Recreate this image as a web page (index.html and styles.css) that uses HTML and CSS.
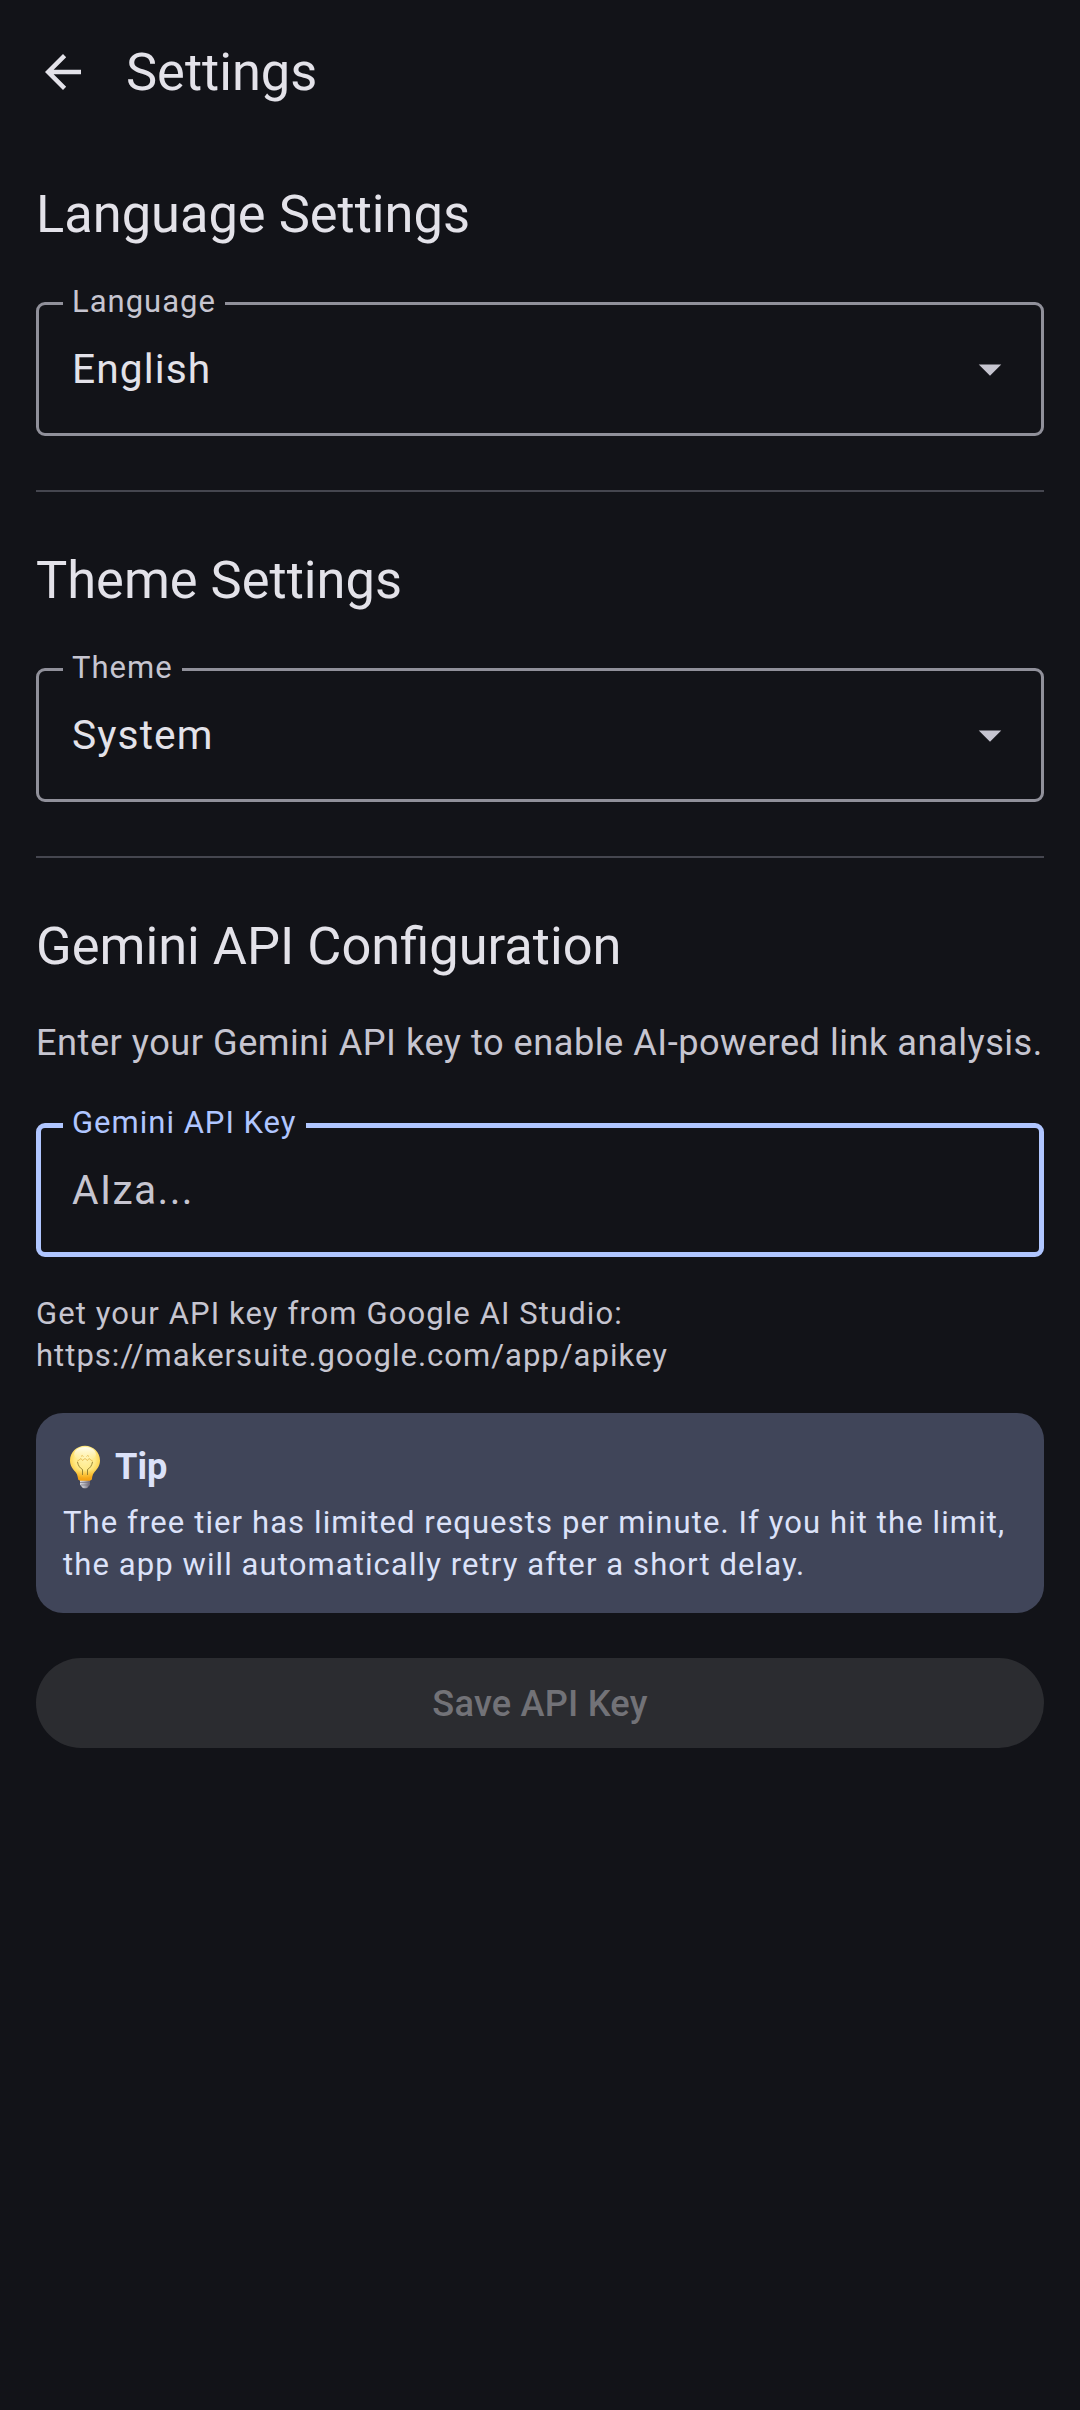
FILE: index.html
```html
<!DOCTYPE html>
<html lang="en">
<head>
<meta charset="utf-8">
<title>Settings</title>
<link rel="stylesheet" href="styles.css">
</head>
<body>
<header class="top-bar">
  <svg class="back-icon" viewBox="0 0 24 24" aria-label="Back"><path fill="currentColor" d="M20 11H7.83l5.59-5.59L12 4l-8 8 8 8 1.41-1.41L7.83 13H20z"/></svg>
  <h1 class="headline">Settings</h1>
</header>
<main class="content">
  <section class="section">
    <h2 class="headline">Language Settings</h2>
    <div class="field">
      <span class="field-label">Language</span>
      <span class="field-value">English</span>
      <svg class="caret" viewBox="0 0 24 24"><path fill="currentColor" d="M7 10l5 5 5-5z"/></svg>
    </div>
  </section>
  <hr class="divider">
  <section class="section">
    <h2 class="headline">Theme Settings</h2>
    <div class="field">
      <span class="field-label">Theme</span>
      <span class="field-value">System</span>
      <svg class="caret" viewBox="0 0 24 24"><path fill="currentColor" d="M7 10l5 5 5-5z"/></svg>
    </div>
  </section>
  <hr class="divider">
  <section class="section">
    <h2 class="headline">Gemini API Configuration</h2>
    <p class="description">Enter your Gemini API key to enable AI-powered link analysis.</p>
    <div class="field field-focused">
      <span class="field-label">Gemini API Key</span>
      <span class="field-value placeholder">AIza...</span>
    </div>
    <p class="small hint">Get your API key from Google AI Studio:<br><span class="url">https://makersuite.google.com/app/apikey</span></p>
    <aside class="tip">
      <h3 class="tip-title">
        <svg class="bulb" viewBox="0 0 32 44">
          <defs>
            <radialGradient id="glass" cx="50%" cy="36%" r="62%">
              <stop offset="0" stop-color="#fff3b0"/>
              <stop offset=".55" stop-color="#ffea86"/>
              <stop offset=".85" stop-color="#fdd04a"/>
              <stop offset="1" stop-color="#f0a41c"/>
            </radialGradient>
            <linearGradient id="shine" x1="0" y1="0" x2="0" y2="1">
              <stop offset="0" stop-color="#fffef2"/>
              <stop offset="1" stop-color="#fff6c4" stop-opacity="0"/>
            </linearGradient>
            <linearGradient id="neck" x1="0" y1="0" x2="0" y2="1">
              <stop offset="0" stop-color="#f9b21d" stop-opacity="0"/>
              <stop offset="1" stop-color="#f6a313"/>
            </linearGradient>
            <linearGradient id="base" x1="0" y1="0" x2="1" y2="0">
              <stop offset="0" stop-color="#d9d9df"/>
              <stop offset=".4" stop-color="#b9b9c1"/>
              <stop offset="1" stop-color="#686070"/>
            </linearGradient>
          </defs>
          <path fill="url(#base)" d="M11 34h10v5.5l-2.500 3.200q-2.500 1.300-5 0L11 39.500z"/>
          <path stroke="#77727f" stroke-width=".7" d="M11 37.500h10M11.500 40h9"/>
          <path fill="url(#glass)" d="M16 .8C7.700.8 1 7.300 1 15.500c0 5 2.600 8.300 5.300 11.300C8.400 29.200 8.800 31 9 33.500q.2 1.700 2 2h10q1.800-.3 2-2c.2-2.500.6-4.300 2.700-6.700 2.700-3 5.300-6.300 5.300-11.300C31 7.300 24.300.8 16 .8z"/>
          <path fill="url(#neck)" d="M4.500 24.500h23c-3 3.500-4.300 5-4.500 9q-.2 1.700-2 2H11q-1.800-.3-2-2c-.2-4-1.500-5.500-4.500-9z"/>
          <ellipse cx="16" cy="9" rx="11" ry="7" fill="url(#shine)"/>
          <path fill="none" stroke="#e4ba52" stroke-width=".9" d="M8 16.500l4-3 1.500 2 2.500-2 2.500 2 1.500-2 4 3M12 11.500q1-2 2.500 0M17.500 11.500q1-2 2.500 0"/>
          <path fill="none" stroke="#8f7a2e" stroke-width=".9" d="M8.500 17c.8 4 2.500 6 5 7.500V30M23.500 17c-.8 4-2.500 6-5 7.500V30"/>
        </svg>
        <span>Tip</span>
      </h3>
      <p class="small">The free tier has limited requests per minute. If you hit the limit,<br>the app will automatically retry after a short delay.</p>
    </aside>
    <button class="save" disabled>Save API Key</button>
  </section>
</main>
</body>
</html>
```
FILE: styles.css
```css
* {
  box-sizing: border-box;
}

body {
  margin: 0;
  min-height: 2410px;
  background: #121318;
  color: #e3e2e9;
  font-family: Roboto, "Liberation Sans", sans-serif;
}

h1, h2, h3, p {
  margin: 0;
}

.top-bar {
  display: flex;
  align-items: center;
  gap: 36px;
  height: 144px;
  padding: 0 36px;
}

.back-icon {
  width: 54px;
  height: 54px;
}

.content {
  padding: 36px;
}

.section {
  display: flex;
  flex-direction: column;
}

.headline {
  font-size: 52.4px;
  font-weight: 400;
  line-height: 68px;
  white-space: nowrap;
}

.field {
  position: relative;
  display: flex;
  align-items: center;
  justify-content: space-between;
  height: 134px;
  margin-top: 54px;
  padding: 0 24px 0 33px;
  border: 3px solid #90909a;
  border-radius: 9px;
}

.field-label {
  position: absolute;
  top: -24px;
  left: 24px;
  padding: 0 9px;
  background: #121318;
  color: #c6c5d0;
  font-size: 31px;
  line-height: 42px;
  letter-spacing: 1px;
  white-space: nowrap;
}

.field-value {
  font-size: 40.7px;
  line-height: 54px;
  letter-spacing: 1.1px;
}

.caret {
  width: 54px;
  height: 54px;
  color: #c6c5d0;
}

.field-focused {
  margin-top: 57px;
  padding-left: 31px;
  border: 5px solid #b0c6ff;
}

.field-focused .field-label {
  top: -26px;
  left: 22px;
  color: #b0c6ff;
}

.placeholder {
  color: #c6c5d0;
  letter-spacing: 1.4px;
}

.divider {
  height: 2px;
  margin: 54px 0;
  border: 0;
  background: #45464f;
}

.description {
  margin-top: 40px;
  color: #c6c5d0;
  font-size: 36.2px;
  line-height: 46px;
  letter-spacing: 0.5px;
  white-space: nowrap;
}

.small {
  font-size: 31px;
  line-height: 42px;
  letter-spacing: 1.1px;
  white-space: nowrap;
}

.hint {
  margin-top: 36px;
  color: #c6c5d0;
}

.url {
  letter-spacing: 1.02px;
}

.tip {
  height: 200px;
  margin-top: 36px;
  padding: 27px;
  border-radius: 27px;
  background: #404559;
  color: #dce2f9;
}

.tip-title {
  display: flex;
  align-items: center;
  gap: 14px;
  margin-bottom: 8px;
  padding-left: 6px;
  font-size: 36.2px;
  font-weight: 700;
  line-height: 54px;
}

.bulb {
  width: 32px;
  height: 44px;
}

.save {
  height: 90px;
  margin-top: 45px;
  padding: 1px 0 0;
  border: 0;
  border-radius: 45px;
  background: #2b2c30;
  color: #727277;
  font-family: inherit;
  font-size: 36.2px;
  font-weight: 500;
  line-height: 46px;
  letter-spacing: 0.2px;
}
```
